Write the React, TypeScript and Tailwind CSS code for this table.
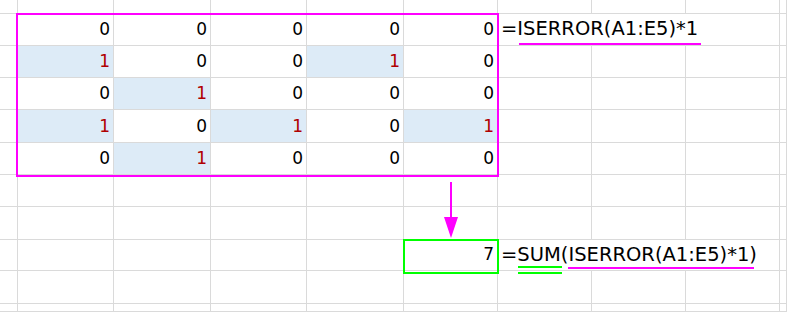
import React from 'react';

const colClasses = [
  'w-[18px]',
  'w-[96px]',
  'w-[97px]',
  'w-[96px]',
  'w-[97px]',
  'w-[94px]',
  'w-[94px]',
  'w-[94px]',
  'w-[94px]',
  'flex-1',
];

const rowClasses = [
  'h-[14px]',
  'h-[32px]',
  'h-[33px]',
  'h-[32px]',
  'h-[33px]',
  'h-[33px]',
  'h-[32px]',
  'h-[33px]',
  'h-[32px]',
  'h-[33px]',
  'flex-1',
];

// 1 = error cell (blue fill, red text)
const data = [
  [0, 0, 0, 0, 0],
  [1, 0, 0, 1, 0],
  [0, 1, 0, 0, 0],
  [1, 0, 1, 0, 1],
  [0, 1, 0, 0, 0],
];

const Mark: React.FC<{ color: string; top: string; right?: string; left?: string; children: React.ReactNode }> = ({
  color,
  top,
  right = 'right-0',
  left = 'left-0',
  children,
}) => (
  <span className="relative">
    {children}
    <span className={`absolute h-[2px] ${color} ${top} ${left} ${right}`}></span>
  </span>
);

const Formula1 = () => (
  <span className="whitespace-nowrap text-[19.5px] leading-none text-black">
    =
    <Mark color="bg-[#ff00ff]" top="top-[calc(100%+2.5px)]" left="left-[2px]" right="-right-[3px]">
      ISERROR(A1:E5)*1
    </Mark>
  </span>
);

const Formula2 = () => (
  <span className="whitespace-nowrap text-[19.5px] leading-none text-black">
    =
    <span className="relative">
      SUM
      <span className="absolute h-[2px] bg-[#00ff00] top-full left-[1px] -right-[1px]"></span>
      <span className="absolute h-[2px] bg-[#00ff00] top-[calc(100%+6px)] left-[1px] -right-[1px]"></span>
    </span>
    (
    <Mark color="bg-[#ff00ff]" top="top-[calc(100%+1px)]" right="right-[3px]">
      ISERROR(A1:E5)*1)
    </Mark>
  </span>
);

const App: React.FC = () => {
  return (
    <div
      className="relative w-[787px] h-[312px] overflow-hidden bg-white flex flex-col"
      style={{ fontFamily: '"DejaVu Sans", Verdana, sans-serif' }}
    >
      {rowClasses.map((rc, r) => (
        <div key={r} className={`flex ${rc}`}>
          {colClasses.map((cc, c) => {
            const dr = r - 1;
            const dc = c - 1;
            const isData = dr >= 0 && dr < 5 && dc >= 0 && dc < 5;
            const val = isData ? data[dr][dc] : null;
            const isFormula = (r === 1 || r === 8) && c === 6;
            // overflowing formula text hides the grid line between F:G and G:H
            const hideRight = (r === 1 || r === 8) && (c === 6 || c === 7);
            return (
              <div
                key={c}
                className={`shrink-0 border-b border-[#dadada] ${hideRight ? '' : 'border-r'} ${cc} ${
                  val === 1 ? 'bg-[#ddebf7]' : ''
                } flex items-end ${isFormula ? 'justify-start pl-[3px] pb-[6px]' : 'justify-end pr-[3px] pb-[7px]'}`}
              >
                {isData && (
                  <span className={`text-[17px] leading-none ${val === 1 ? 'text-[#b00000]' : 'text-black'}`}>
                    {val}
                  </span>
                )}
                {r === 8 && c === 5 && <span className="text-[17px] leading-none text-black">7</span>}
                {r === 1 && c === 6 && <Formula1 />}
                {r === 8 && c === 6 && <Formula2 />}
              </div>
            );
          })}
        </div>
      ))}

      {/* A1:E5 highlight */}
      <div className="absolute left-[16px] top-[13px] w-[483px] h-[164px] border-2 border-[#ff00ff] pointer-events-none"></div>

      {/* arrow */}
      <svg className="absolute left-[443px] top-[181px]" width="16" height="58" viewBox="0 0 16 58">
        <rect x="7" y="1" width="2" height="37" fill="#ff00ff" />
        <polygon points="1,36 15,36 8,57" fill="#ff00ff" />
      </svg>

      {/* result cell */}
      <div className="absolute left-[403px] top-[239px] w-[96px] h-[35px] border-2 border-[#00ff00] pointer-events-none"></div>
    </div>
  );
};

export default App;
